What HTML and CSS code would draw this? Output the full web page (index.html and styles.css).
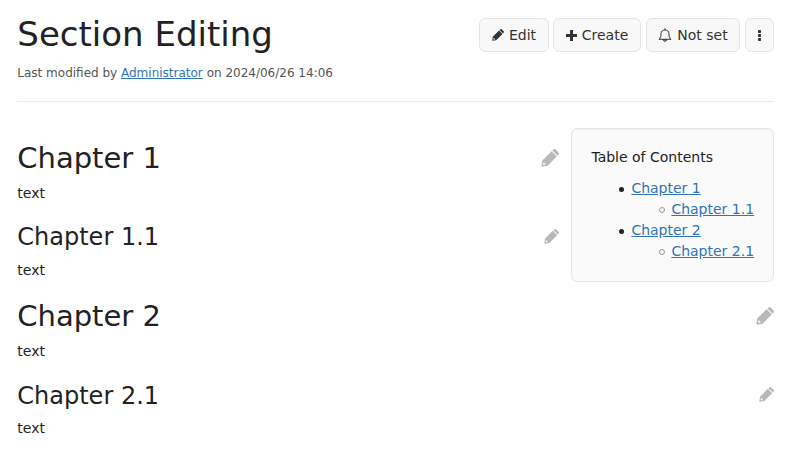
FILE: index.html
```html
<!DOCTYPE html>
<html lang="en">
<head>
<meta charset="utf-8">
<title>Section Editing</title>
<link rel="stylesheet" href="styles.css">
</head>
<body>
<svg class="sprite" aria-hidden="true">
  <symbol id="pencil" viewBox="0 0 18 18"><path fill-rule="evenodd" d="M.4 17.600L1.100 11.700 10.600 2.200 15.800 7.400 6.300 16.900zM2.400 13.500 2 15 3 16 4.500 15.600 4.500 14.600 3.400 14.600 3.400 13.500zM11.300 1.500 12.500.5q1.100-.9 2.100 0L17.500 3.400q.9 1 0 2.100L16.500 6.700z"/></symbol>
</svg>
<header class="page-header">
  <h1>Section Editing</h1>
  <nav class="actions">
    <button class="btn edit"><svg class="ico"><use href="#pencil"/></svg>Edit</button>
    <button class="btn create"><svg class="ico plus" viewBox="0 0 11 11"><path d="M4 0h3v4h4v3H7v4H4V7H0V4h4z"/></svg>Create</button>
    <button class="btn watch"><svg class="bell" viewBox="0 0 14 14"><path d="M1 11.300C2.700 9.800 3 8 3 5.500 3 3.400 4.700 2 7 2s4 1.400 4 3.500c0 2.500.3 4.300 2 5.800zM7 .3V2M5.500 11.800a1.500 1.500 0 0 0 3 0z"/></svg>Not set</button>
    <button class="btn more" aria-label="More"><svg class="dots" viewBox="0 0 3 11"><rect width="3" height="3" rx=".8"/><rect y="4" width="3" height="3" rx=".8"/><rect y="8" width="3" height="3" rx=".8"/></svg></button>
  </nav>
</header>
<p class="meta">Last modified by <a href="#">Administrator</a> on 2024/06/26 14:06</p>
<hr>
<main class="content">
  <div class="upper">
    <div class="sections">
      <div class="heading major"><h2>Chapter 1</h2><svg><use href="#pencil"/></svg></div>
      <p>text</p>
      <div class="heading minor"><h3>Chapter 1.1</h3><svg><use href="#pencil"/></svg></div>
      <p>text</p>
    </div>
    <aside class="toc">
      <p>Table of Contents</p>
      <ul>
        <li><a href="#">Chapter 1</a><ul><li><a href="#">Chapter 1.1</a></li></ul></li>
        <li><a href="#">Chapter 2</a><ul><li><a href="#">Chapter 2.1</a></li></ul></li>
      </ul>
    </aside>
  </div>
  <div class="lower">
    <div class="heading major"><h2>Chapter 2</h2><svg><use href="#pencil"/></svg></div>
    <p>text</p>
    <div class="heading minor"><h3>Chapter 2.1</h3><svg><use href="#pencil"/></svg></div>
    <p>text</p>
  </div>
</main>
</body>
</html>
```
FILE: styles.css
```css
*, *::before { box-sizing: border-box; }
body {
  margin: 0;
  padding: 15px 15px 0 17.300px;
  overflow: hidden;
  background: #fff;
  color: #222;
  font: 14px/21px "DejaVu Sans", sans-serif;
}
h1, h2, h3, p { margin: 0; font-weight: 400; }
a { color: #3174b5; text-decoration: underline; }
.sprite { position: absolute; width: 0; height: 0; }
.page-header { display: flex; justify-content: space-between; height: 39px; }
h1 { font-size: 34px; line-height: 38px; }
.actions { display: flex; gap: 5px; padding-top: 3px; }
.btn {
  display: flex;
  align-items: center;
  justify-content: center;
  gap: 5px;
  height: 34px;
  padding: 0;
  border: 1px solid #e5e5e5;
  border-radius: 6px;
  background: #f8f8f8;
  color: #333;
  font: inherit;
}
.edit { width: 70px; }
.create { width: 88px; margin-left: -1px; }
.watch { width: 94px; }
.more { width: 29px; }
.ico { width: 12px; height: 12px; fill: currentColor; }
.plus { width: 11px; height: 11px; }
.bell { width: 14px; height: 14px; fill: none; stroke: currentColor; stroke-width: 1; }
.dots { width: 3px; height: 11px; fill: currentColor; }
.meta { margin-top: 10px; color: #555; font-size: 12px; line-height: 18px; }
hr { height: 1px; margin: 19px 0 26px; border: 0; background: #ebebeb; }
.upper { display: flex; gap: 12px; height: 170px; }
.sections { flex: 1; padding-top: 12px; }
.heading { display: flex; align-items: center; justify-content: space-between; }
.heading svg { fill: #b8b8b8; }
.major { height: 36px; margin-bottom: 7px; }
.major svg { width: 18px; height: 18px; }
.minor { height: 30px; margin: 18px 0 8px; }
.minor svg { width: 15px; height: 15px; margin-bottom: 1px; }
.lower .minor { margin: 19px 0 7px; }
.lower .minor svg { margin-bottom: 3px; }
h2 { font-size: 29px; line-height: 36px; }
h3 { font-size: 24px; line-height: 30px; }
.toc {
  width: 203px;
  height: 154px;
  padding: 18px 0 0 19.400px;
  border: 1px solid #e5e5e5;
  border-radius: 6px;
  background: #fafafa;
  box-shadow: inset 0 1px 1px rgba(0, 0, 0, .05);
}
.toc p { margin-bottom: 10px; }
.toc ul { margin: 0; padding-left: 40px; list-style: none; white-space: nowrap; }
.toc li { position: relative; }
.toc li::before {
  content: "";
  position: absolute;
  top: 9px;
  left: -12px;
  width: 5px;
  height: 5px;
  border-radius: 50%;
  background: #222;
}
.toc li li::before { top: 8px; width: 6px; height: 6px; border: 1px solid #999; background: none; }
```
